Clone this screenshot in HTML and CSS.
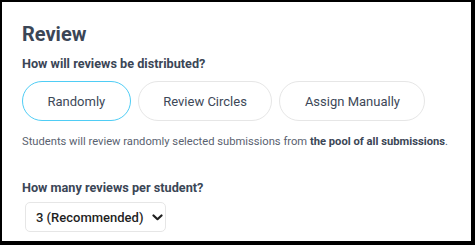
FILE: index.html
```html
<!DOCTYPE html>
<html lang="en">
<head>
<meta charset="utf-8">
<title>Review</title>
<link rel="stylesheet" href="styles.css">
</head>
<body>
<section class="card">
  <h2 class="title">Review</h2>
  <p class="label">How will reviews be distributed?</p>
  <div class="options">
    <button class="option active">Randomly</button>
    <button class="option">Review Circles</button>
    <button class="option">Assign Manually</button>
  </div>
  <p class="desc">Students will review randomly selected submissions from <b>the pool of all submissions</b>.</p>
  <p class="label label-count">How many reviews per student?</p>
  <div class="select">
    <span class="select-value">3 (Recommended)</span>
    <svg class="chev" width="11" height="7" viewBox="0 0 11 7"><path d="M1.5 1.5 L5.5 5.2 L9.5 1.5" fill="none" stroke="#1f1f1f" stroke-width="2.2" stroke-linecap="round" stroke-linejoin="round"/></svg>
  </div>
</section>
</body>
</html>
```
FILE: styles.css
```css
html, body {
  margin: 0;
  padding: 0;
  background: #000;
}
body {
  width: 475px;
  height: 245px;
  overflow: hidden;
  font-family: Roboto, "Liberation Sans", sans-serif;
}
.card {
  margin: 2px 0 0 2px;
  width: 469px;
  height: 239px;
  box-sizing: border-box;
  background: #fff;
  padding: 20px 20px 0 20px;
}
.title {
  margin: 0;
  font-size: 20px;
  line-height: 24px;
  font-weight: 700;
  color: #3b4656;
}
.label {
  margin: 10px 0 0 0;
  font-size: 12.7px;
  line-height: 16px;
  font-weight: 700;
  color: #3b4656;
}
.options {
  display: flex;
  gap: 7px;
  margin-top: 9px;
}
.option {
  height: 40px;
  padding: 0 24.5px;
  border: 1px solid #e6e6e6;
  border-radius: 20px;
  background: #fff;
  font-family: Roboto, "Liberation Sans", sans-serif;
  font-size: 13px;
  color: #3d4858;
  cursor: pointer;
}
.option.active {
  border-color: #4fcdf5;
}
.desc {
  margin: 13px 0 0 0;
  font-size: 11.2px;
  line-height: 16px;
  color: #5a6270;
}
.desc b {
  font-weight: 700;
  color: #3b4656;
}
.label-count {
  margin-top: 30px;
}
.select {
  margin: 6px 0 0 3px;
  width: 141px;
  height: 30px;
  box-sizing: border-box;
  border: 1px solid #e6e6e6;
  border-radius: 5px;
  display: flex;
  align-items: center;
  padding: 0 0 0 10px;
  gap: 9px;
}
.select-value {
  font-size: 13px;
  font-weight: 500;
  color: #1f1f1f;
}
.chev {
  display: block;
}
```
